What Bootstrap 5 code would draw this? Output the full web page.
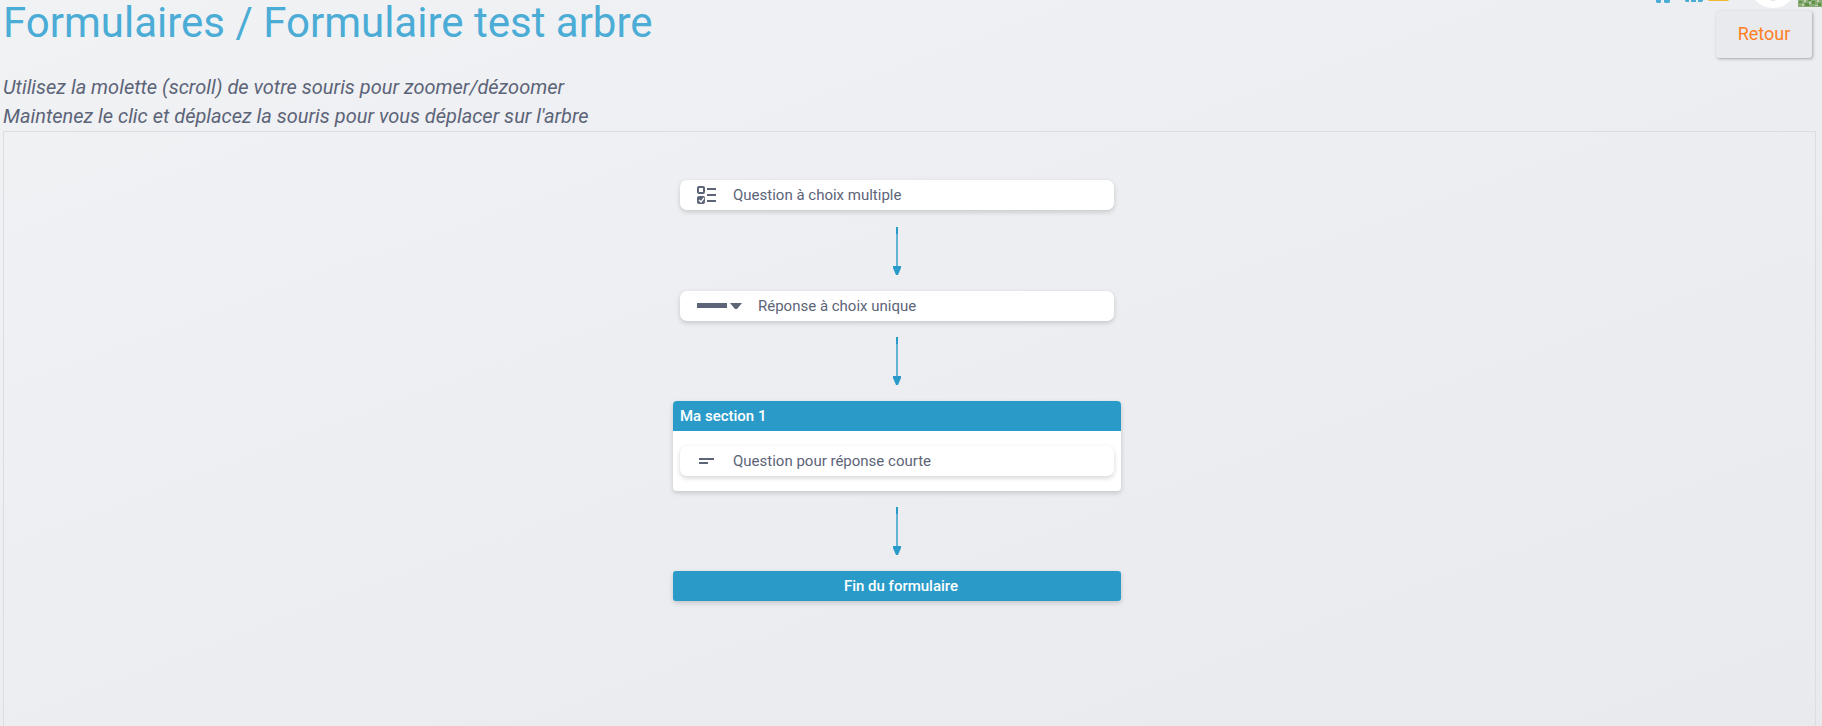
<!DOCTYPE html>
<html lang="fr">
<head>
<meta charset="utf-8">
<meta name="viewport" content="width=device-width, initial-scale=1">
<title>Formulaire test arbre</title>
<link href="https://cdn.jsdelivr.net/npm/bootstrap@5.3.0/dist/css/bootstrap.min.css" rel="stylesheet">
<style>
  body {
    font-family: Roboto, "Liberation Sans", sans-serif;
    color: #5c6478;
    background: linear-gradient(160deg, #f1f2f4 0%, #edeef2 45%, #e9eaee 100%);
  }
  .page { min-height: 100vh; }
  .intro { padding-left: 3px; }
  .page-title { font-size: 42px; line-height: 46px; font-weight: 400; color: #4bacd6; }
  .hints { font-size: 20px; line-height: 29px; padding-top: 27px; }
  .tools { display: block; width: 168px; height: 8px; }
  .btn-back {
    width: 96px; height: 47px; margin: 3px 10px 0 0; padding: 0 0 2px; font-size: 18px;
    color: #ff7f1f; background: #e9eaee; border: 0; border-radius: 3px;
    box-shadow: 1px 1px 3px rgba(0,0,0,.3);
  }
  .btn-back:hover { color: #ff7f1f; background: #e3e4e9; }
  .tree-frame { margin: 0 6px 0 3px; padding: 48px 25px 0 0; border: 1px solid #dcdde1; border-bottom: 0; }
  .tree { width: 100%; max-width: 448px; font-size: 15px; line-height: 30px; }
  .question { margin: 0 7px; padding: 0 17px; gap: 16px; background: #fff; border-radius: 7px; }
  .question, .section-box, .end-box { box-shadow: 0 2px 5px rgba(0,0,0,.17); }
  .section-box { background: #fff; border-radius: 4px; padding-bottom: 15px; overflow: hidden; }
  .section-title { padding: 0 7px; margin-bottom: 15px; }
  .section-title, .end-box { font-size: 15px; line-height: 30px; font-weight: 500; color: #fff; background: #2a9bc9; }
  .end-box { border-radius: 3px; padding-left: 8px; }
  .arrow { display: block; margin: 16px auto; }
</style>
</head>
<body>
<div class="page d-flex flex-column">
  <header class="d-flex justify-content-between">
    <div class="intro">
      <h1 class="page-title m-0">Formulaires / Formulaire test arbre</h1>
      <p class="hints fst-italic m-0">Utilisez la molette (scroll) de votre souris pour zoomer/dézoomer<br>Maintenez le clic et déplacez la souris pour vous déplacer sur l'arbre</p>
    </div>
    <div class="d-flex flex-column align-items-end">
      <svg class="tools" viewBox="0 0 168 8" aria-hidden="true">
        <path fill="#4bacd6" d="M2 0h5v2l-1 1H3L2 2zM10 0h6v2l-1 1h-4l-1-1zM31 0h4v2h-3l-1-1zM37 0h5v2h-5zM44 0h5v1l-1 1h-4z"/>
        <path fill="#efb82e" d="M54 0h21l-1 1H55z"/>
        <circle cx="119" cy="-16" r="24" fill="#fff"/>
        <path fill="#e6e7ea" d="M116 0h6l-2 1h-2z"/>
        <path fill="#8aad75" d="M144 0h24v7h-24z"/>
        <path fill="#5f9048" d="M145 1h3v2h-3zM151 3h4v3h-4zM158 1h3v3h-3zM164 3h3v3h-3zM154 0h3v1h-3z"/>
        <path fill="#c1cdb4" d="M148 4h2v2h-2zM155 2h2v2h-2zM161 5h3v1h-3zM150 0h2v2h-2zM163 0h2v2h-2z"/>
      </svg>
      <button type="button" class="btn btn-back">Retour</button>
    </div>
  </header>

  <main class="tree-frame flex-grow-1">
    <div class="tree mx-auto">
      <div class="question d-flex align-items-center">
        <svg width="20" height="18" viewBox="0 0 20 18" aria-hidden="true">
          <rect x="1" y="1" width="6" height="6" rx="1" fill="none" stroke="#5c6478" stroke-width="2"/>
          <rect x="0" y="10" width="8" height="8" rx="2" fill="#5c6478"/>
          <path d="M2 14l2 2 3-4" fill="none" stroke="#fff" stroke-width="1.3"/>
          <path d="M10 3h9M10 9h9M10 15h9" stroke="#5c6478" stroke-width="2"/>
        </svg>
        <span>Question à choix multiple</span>
      </div>
      <svg class="arrow" width="8" height="49" viewBox="0 0 8 49" aria-hidden="true"><path fill="#62b4d6" d="M3 8h2v32H3z"/><path fill="#2a9bc9" d="M3 1h2v7H3zM0 40h8v2L5 49H3L0 42z"/></svg>
      <div class="question d-flex align-items-center">
        <svg width="45" height="8" viewBox="0 0 45 8" aria-hidden="true"><path fill="#5c6478" d="M0 1h30v5H0zM33 1h12l-5 6h-2z"/></svg>
        <span>Réponse à choix unique</span>
      </div>
      <svg class="arrow" width="8" height="48" viewBox="0 0 8 48" aria-hidden="true"><path fill="#62b4d6" d="M3 7h2v32H3z"/><path fill="#2a9bc9" d="M3 0h2v7H3zM0 39h8v2L5 48H3L0 41z"/></svg>
      <section class="section-box">
        <h2 class="section-title">Ma section 1</h2>
        <div class="question d-flex align-items-center">
          <svg width="20" height="8" viewBox="0 0 20 8" aria-hidden="true"><path d="M2 2h15M2 6h9" stroke="#5c6478" stroke-width="2"/></svg>
          <span>Question pour réponse courte</span>
        </div>
      </section>
      <svg class="arrow" width="8" height="48" viewBox="0 0 8 48" aria-hidden="true"><path fill="#62b4d6" d="M3 7h2v32H3z"/><path fill="#2a9bc9" d="M3 0h2v7H3zM0 39h8v2L5 48H3L0 41z"/></svg>
      <div class="end-box text-center">Fin du formulaire</div>
    </div>
  </main>
</div>
<script src="https://cdn.jsdelivr.net/npm/bootstrap@5.3.0/dist/js/bootstrap.bundle.min.js"></script>
</body>
</html>
